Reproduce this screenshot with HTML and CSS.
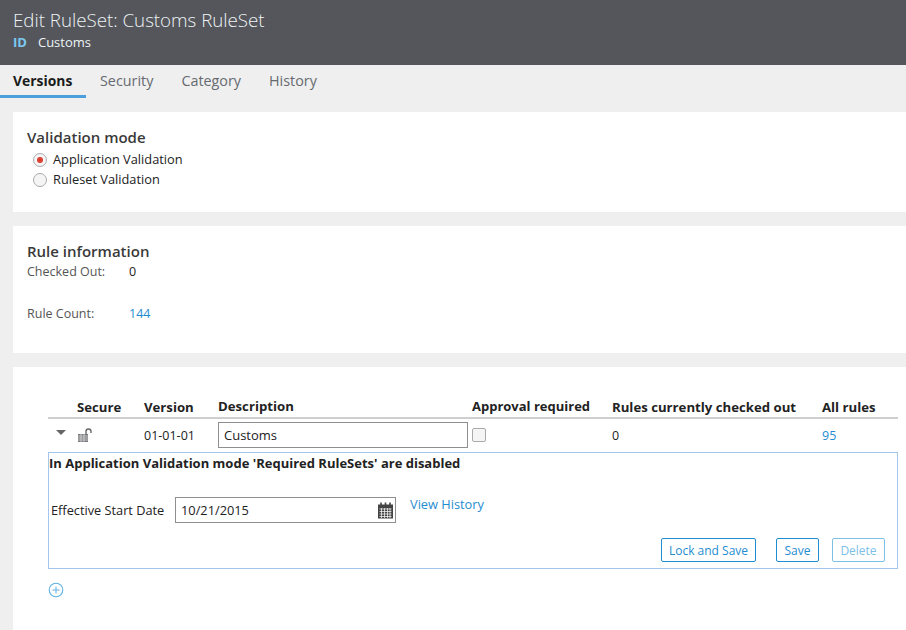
FILE: index.html
```html
<!DOCTYPE html>
<html>
<head>
  <meta charset="utf-8">
  <title>Edit RuleSet</title>
  <link rel="stylesheet" href="styles.css">
</head>
<body>
  <div class="header">
    <div class="header-title">Edit RuleSet: Customs RuleSet</div>
    <div class="header-sub"><b>ID</b><span>Customs</span></div>
  </div>

  <div class="tabs">
    <div class="tab active">Versions</div>
    <div class="tab">Security</div>
    <div class="tab">Category</div>
    <div class="tab">History</div>
  </div>

  <div class="card card-mode">
    <h2>Validation mode</h2>
    <div class="radio-row"><span class="radio checked"></span>Application Validation</div>
    <div class="radio-row"><span class="radio"></span>Ruleset Validation</div>
  </div>

  <div class="card card-info">
    <h2>Rule information</h2>
    <div class="info-row"><span class="info-label">Checked Out:</span><span>0</span></div>
    <div class="info-row info-count"><span class="info-label">Rule Count:</span><a class="link">144</a></div>
  </div>

  <div class="card card-versions">
    <div class="table-head">
      <span></span>
      <span>Secure</span>
      <span>Version</span>
      <span class="up">Description</span>
      <span class="up approval">Approval required</span>
      <span>Rules currently checked out</span>
      <span>All rules</span>
    </div>
    <div class="table-row">
      <span class="caret"></span>
      <svg class="lock" width="16" height="14" viewBox="0 0 16 14">
        <rect x="1" y="6" width="10" height="8" fill="#77797c"/>
        <path d="M1 8h10M1 10h10M1 12h10M4 6v8M7 6v8" stroke="#e4e4e4" stroke-width="0.7"/>
        <path d="M9 6V3.200C9 1.800 10 1 11.500 1S14 1.800 14 3.200V5" fill="none" stroke="#66686b" stroke-width="1.400"/>
      </svg>
      <span>01-01-01</span>
      <div class="input desc-input">Customs</div>
      <span class="checkbox"></span>
      <span>0</span>
      <a class="link">95</a>
    </div>

    <div class="detail">
      <div class="detail-note">In Application Validation mode 'Required RuleSets' are disabled</div>
      <div class="date-row">
        <span class="date-label">Effective Start Date</span>
        <div class="input date-input">
          10/21/2015
          <svg width="15" height="17" viewBox="0 0 15 17">
            <path d="M0 2.500h15v14h-15z" fill="#444"/>
            <path d="M3 0.500v4M7.500 0.500v4M12 0.500v4" stroke="#444" stroke-width="1.600"/>
            <path d="M1.500 7h12M1.500 9.500h12M1.500 12h12M1.500 14.500h12M3.500 6v10M6.500 6v10M9.500 6v10M12 6v10" stroke="#fff" stroke-width="0.700"/>
          </svg>
        </div>
        <a class="link history-link">View History</a>
      </div>
      <div class="actions">
        <button class="btn btn-lock">Lock and Save</button>
        <button class="btn btn-save">Save</button>
        <button class="btn btn-delete">Delete</button>
      </div>
    </div>

    <svg class="add" width="16" height="16" viewBox="0 0 16 16">
      <circle cx="8" cy="8" r="6.800" fill="none" stroke="#5db0e4" stroke-width="1.100"/>
      <path d="M8 4.500v7M4.500 8h7" stroke="#5db0e4" stroke-width="1"/>
    </svg>
  </div>
</body>
</html>
```

FILE: styles.css
```css
html, body {
  height: 630px;
  overflow: hidden;
}

body {
  margin: 0;
  background-color: #efefef;
  font-family: "Open Sans", sans-serif;
  font-size: 13px;
  color: #222;
}

.header {
  height: 65px;
  box-sizing: border-box;
  padding: 7px 13px 0;
  background-color: #54565b;
  color: #eef3f6;
}

.header-title {
  font-size: 18.720px;
  font-weight: 300;
  line-height: 25px;
}

.header-sub {
  display: flex;
  gap: 11px;
  margin-top: 1px;
  font-size: 13px;
  line-height: 18px;
}

.header-sub b {
  color: #7cc8f2;
}

.tabs {
  display: flex;
  height: 33px;
  margin-bottom: 14px;
}

.tab {
  box-sizing: border-box;
  height: 33px;
  padding: 6px 14px 0;
  font-size: 14.350px;
  color: #666a70;
  line-height: 20px;
}

.tab.active {
  width: 86px;
  padding: 6px 0 0 13px;
  font-size: 13.900px;
  font-weight: 700;
  color: #1b1b1b;
  border-bottom: 3px solid #4a9fdc;
}

.card {
  margin: 0 0 14px 13px;
  background-color: #fff;
  box-sizing: border-box;
}

.card h2 {
  margin: 0 0 2px;
  font-size: 15px;
  font-weight: 600;
  line-height: 20px;
  color: #3a3a3a;
}

.card-mode {
  height: 100px;
  padding: 15px 14px 0;
}

.radio-row {
  display: flex;
  align-items: center;
  gap: 6px;
  height: 20px;
  padding-left: 6px;
  font-size: 12.800px;
}

.radio {
  width: 12px;
  height: 12px;
  border: 1px solid #aaa;
  border-radius: 50%;
  background-color: #f5f5f5;
  display: flex;
  align-items: center;
  justify-content: center;
  margin-top: 2px;
}

.radio.checked::after {
  content: "";
  width: 6px;
  height: 6px;
  border-radius: 50%;
  background-color: #d9412f;
}

.card-info {
  height: 127px;
  padding: 15px 14px 0;
}

.info-row {
  display: flex;
  font-size: 12.500px;
  line-height: 18px;
}

.info-row .info-label {
  width: 102px;
  color: #555;
}

.info-count {
  margin-top: 24px;
}

.link {
  color: #1f8dd0;
}

.card-versions {
  height: 263px;
  padding: 30px 8px 0 35px;
  margin-bottom: 0;
}

.table-head,
.table-row {
  display: grid;
  grid-template-columns: 29px 67px 74px 254px 140px 210px 76px;
  align-items: center;
}

.table-head {
  height: 20px;
  font-weight: 700;
  font-size: 13.200px;
  color: #222;
  border-bottom: 2px solid #cfcfcf;
}

.table-head .up {
  margin-top: -3px;
}

.table-head .approval {
  font-size: 13px;
}

.table-row {
  height: 33px;
  font-size: 12.500px;
}

.caret {
  width: 0;
  height: 0;
  margin: -6px 0 0 8px;
  border-left: 5px solid transparent;
  border-right: 5px solid transparent;
  border-top: 5px solid #666;
}

.lock {
  margin-top: -2px;
}

.input {
  box-sizing: border-box;
  border: 1px solid #8f8f8f;
  background-color: #fff;
  font-size: 13px;
  line-height: 23px;
  padding-left: 5px;
}

.desc-input {
  width: 250px;
  height: 26px;
  margin-bottom: 1px;
  line-height: 24px;
}

.checkbox {
  width: 12px;
  height: 12px;
  border: 1px solid #aaa;
  border-radius: 2px;
  background-color: #f5f5f5;
  margin-top: -1px;
}

.detail {
  box-sizing: border-box;
  height: 117px;
  border: 1px solid #a4c5ec;
}

.detail-note {
  font-weight: 700;
  font-size: 13px;
  line-height: 20px;
}

.date-row {
  display: flex;
  align-items: flex-start;
  margin-top: 24px;
}

.date-label {
  width: 126px;
  padding-left: 2px;
  box-sizing: border-box;
  font-size: 12.750px;
  line-height: 27px;
}

.date-input {
  display: flex;
  justify-content: space-between;
  align-items: center;
  width: 221px;
  height: 26px;
  padding-right: 2px;
  font-size: 12.800px;
}

.history-link {
  margin-left: 14px;
  font-size: 12.800px;
  line-height: 14px;
}

.actions {
  display: flex;
  justify-content: flex-end;
  margin-top: 14px;
  padding-right: 12px;
}

.btn {
  height: 24px;
  padding: 0;
  border: 1px solid #1f8dd0;
  border-radius: 2px;
  background-color: #fff;
  color: #1f8dd0;
  font-family: "Open Sans", sans-serif;
  font-size: 12px;
}

.btn-lock {
  width: 95px;
  margin-right: 20px;
}

.btn-save {
  width: 43px;
  margin-right: 13px;
}

.btn-delete {
  width: 53px;
  border-color: #7cc0e8;
  color: #7cc0e8;
}

.add {
  display: block;
  margin-top: 13px;
}
```
